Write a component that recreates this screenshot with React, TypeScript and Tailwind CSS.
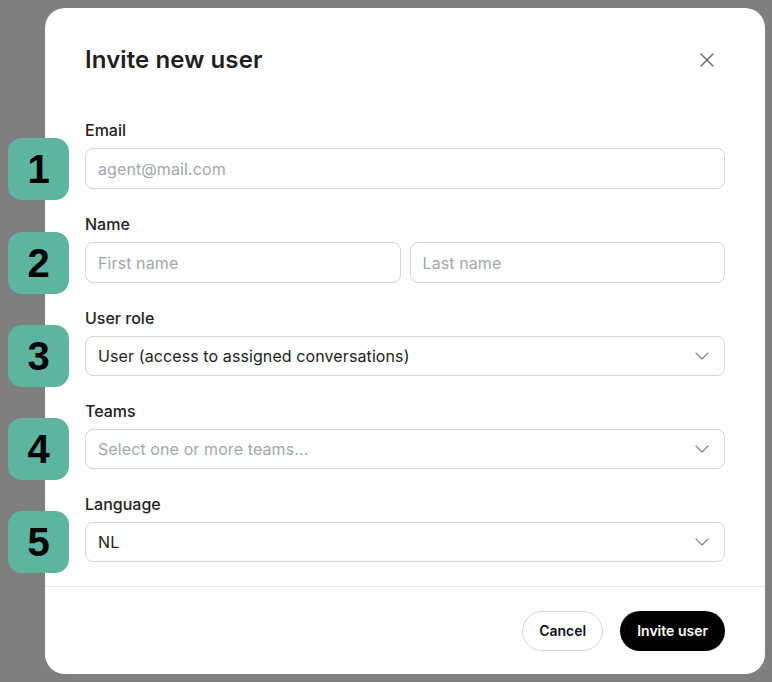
import { ChevronDown, X } from 'lucide-react';
import type { ReactNode } from 'react';

function Badge({ n }: { n: number }) {
  return (
    <div
      className="absolute left-[-77px] top-1/2 -translate-y-1/2 w-[61px] h-[62px] rounded-[14px] bg-[#5bb5a0] flex items-center justify-center text-black text-[40px] font-bold leading-none"
      style={{ fontFamily: '"Liberation Sans", Arial, sans-serif' }}
    >
      {n}
    </div>
  );
}

function Field({ label, n, children }: { label: string; n: number; children: ReactNode }) {
  return (
    <div className="flex flex-col">
      <label className="text-base leading-6 font-medium text-[#222]">{label}</label>
      <div className="relative mt-1.5">
        <Badge n={n} />
        {children}
      </div>
    </div>
  );
}

function TextInput({ placeholder }: { placeholder: string }) {
  return (
    <input
      placeholder={placeholder}
      className="w-full h-[41px] rounded-lg border border-[#d4d6da] px-3 text-base tracking-[0.1px] text-[#222] placeholder:text-[#a3a7ad] outline-none"
    />
  );
}

function Select({ value, placeholder }: { value?: string; placeholder?: string }) {
  return (
    <div className="w-full h-[40px] rounded-lg border border-[#d4d6da] pl-3 pr-[10px] flex items-center justify-between">
      <span className={`text-base tracking-[0.1px] ${value ? 'text-[#222]' : 'text-[#a3a7ad]'}`}>{value ?? placeholder}</span>
      <ChevronDown size={24} strokeWidth={1.1} className="text-[#7b7f86]" />
    </div>
  );
}

export default function App() {
  return (
    <div className="min-h-[682px] w-[772px] bg-[#7f7f7f] pt-2 pl-[45px]" style={{ fontFamily: 'Inter, "Noto Sans", sans-serif' }}>
      <div className="w-[720px] h-[666px] bg-white rounded-[20px] flex flex-col">
        <div className="px-10 pt-9 flex items-center justify-between">
          <h2 className="text-2xl leading-8 font-semibold tracking-[0.1px] text-[#1f1f1f]">Invite new user</h2>
          <button className="text-[#6b7078] mr-[6px]">
            <X size={24} strokeWidth={1.5} />
          </button>
        </div>

        <div className="px-10 mt-[42px] flex flex-col gap-[23px]">
          <Field label="Email" n={1}>
            <TextInput placeholder="agent@mail.com" />
          </Field>
          <Field label="Name" n={2}>
            <div className="flex gap-[9px]">
              <TextInput placeholder="First name" />
              <TextInput placeholder="Last name" />
            </div>
          </Field>
          <Field label="User role" n={3}>
            <Select value="User (access to assigned conversations)" />
          </Field>
          <Field label="Teams" n={4}>
            <Select placeholder="Select one or more teams..." />
          </Field>
          <Field label="Language" n={5}>
            <Select value="NL" />
          </Field>
        </div>

        <div className="mt-6 border-t border-[#e6e7ea]" />

        <div className="px-10 pt-6 flex justify-end gap-[17px]">
          <button className="h-10 px-4 rounded-full border border-[#d4d6da] text-sm font-semibold text-[#111]">Cancel</button>
          <button className="h-10 px-[17px] rounded-full bg-black text-sm font-semibold text-white">Invite user</button>
        </div>
      </div>
    </div>
  );
}
